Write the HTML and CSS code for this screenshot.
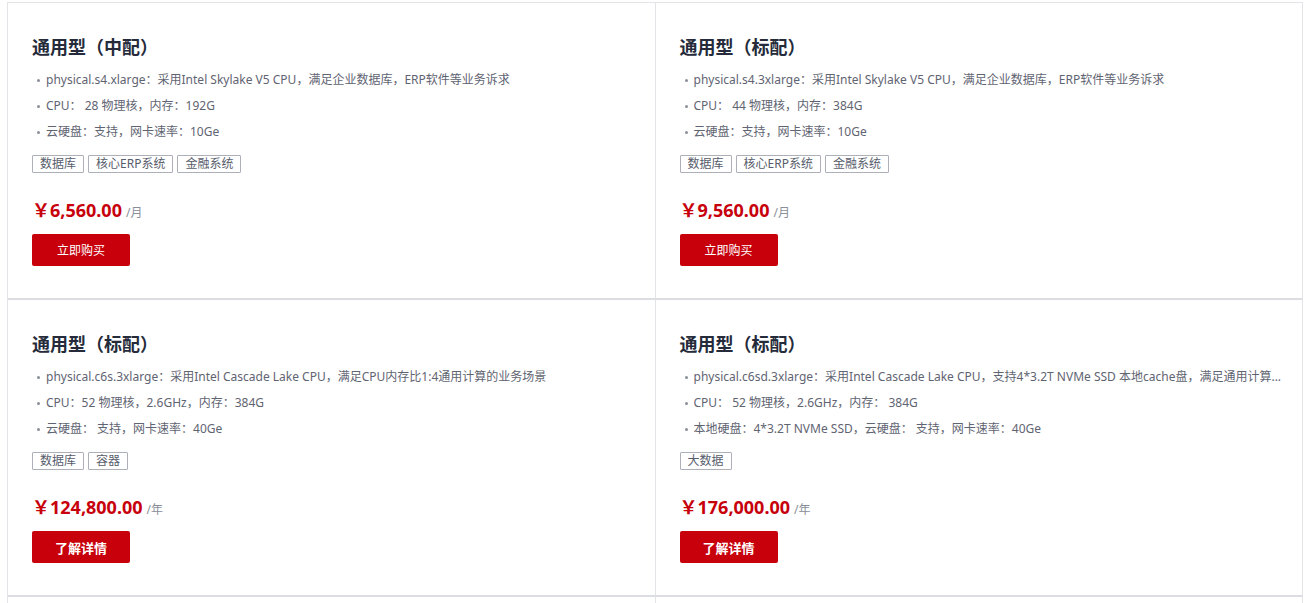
FILE: index.html
```html
<!DOCTYPE html>
<html lang="zh-CN">
<head>
<meta charset="utf-8">
<title>通用型</title>
<link rel="stylesheet" href="styles.css">
</head>
<body>
<div class="grid">
  <div class="card">
    <h3 class="title">通用型（中配）</h3>
    <ul class="specs">
      <li>physical.s4.xlarge：采用Intel Skylake V5 CPU，满足企业数据库，ERP软件等业务诉求</li>
      <li>CPU： 28 物理核，内存：192G</li>
      <li>云硬盘：支持，网卡速率：10Ge</li>
    </ul>
    <div class="tags"><span class="tag">数据库</span><span class="tag">核心ERP系统</span><span class="tag">金融系统</span></div>
    <div class="price"><span class="amount">￥6,560.00</span><span class="unit">/月</span></div>
    <a class="btn" href="#">立即购买</a>
  </div>
  <div class="card">
    <h3 class="title">通用型（标配）</h3>
    <ul class="specs">
      <li>physical.s4.3xlarge：采用Intel Skylake V5 CPU，满足企业数据库，ERP软件等业务诉求</li>
      <li>CPU： 44 物理核，内存：384G</li>
      <li>云硬盘：支持，网卡速率：10Ge</li>
    </ul>
    <div class="tags"><span class="tag">数据库</span><span class="tag">核心ERP系统</span><span class="tag">金融系统</span></div>
    <div class="price"><span class="amount">￥9,560.00</span><span class="unit">/月</span></div>
    <a class="btn" href="#">立即购买</a>
  </div>
  <div class="card">
    <h3 class="title">通用型（标配）</h3>
    <ul class="specs">
      <li>physical.c6s.3xlarge：采用Intel Cascade Lake CPU，满足CPU内存比1:4通用计算的业务场景</li>
      <li>CPU：52 物理核，2.6GHz，内存：384G</li>
      <li>云硬盘： 支持，网卡速率：40Ge</li>
    </ul>
    <div class="tags"><span class="tag">数据库</span><span class="tag">容器</span></div>
    <div class="price"><span class="amount">￥124,800.00</span><span class="unit">/年</span></div>
    <a class="btn btn-bold" href="#">了解详情</a>
  </div>
  <div class="card">
    <h3 class="title">通用型（标配）</h3>
    <ul class="specs">
      <li title="physical.c6sd.3xlarge：采用Intel Cascade Lake CPU，支持4*3.2T NVMe SSD 本地cache盘，满足通用计算的业务场景">physical.c6sd.3xlarge：采用Intel Cascade Lake CPU，支持4*3.2T NVMe SSD 本地cache盘，满足通用计算...</li>
      <li>CPU： 52 物理核，2.6GHz，内存： 384G</li>
      <li>本地硬盘：4*3.2T NVMe SSD，云硬盘： 支持，网卡速率：40Ge</li>
    </ul>
    <div class="tags"><span class="tag">大数据</span></div>
    <div class="price"><span class="amount">￥176,000.00</span><span class="unit">/年</span></div>
    <a class="btn btn-bold" href="#">了解详情</a>
  </div>
  <div class="card card-stub"></div>
  <div class="card card-stub"></div>
</div>
</body>
</html>
```
FILE: styles.css
```css
html, body {
  margin: 0;
  padding: 0;
  background: #fff;
  font-family: "Noto Sans", "Noto Sans CJK SC", sans-serif;
  overflow: hidden;
}
.grid {
  margin: 2px 3px 0 7px;
  display: grid;
  grid-template-columns: 1fr 1fr;
  border-top: 1px solid #e3e4e8;
  border-left: 1px solid #e3e4e8;
}
.card {
  box-sizing: border-box;
  height: 297px;
  padding: 32px 20px 0 24px;
  border-right: 1px solid #e3e4e8;
  border-bottom: 2px solid #dcdde1;
  min-width: 0;
}
.title {
  margin: 0;
  font-size: 18px;
  line-height: 24px;
  font-weight: 700;
  color: #252b3a;
}
.specs {
  margin: 8px 0 0;
  padding: 0;
  list-style: none;
}
.specs li {
  position: relative;
  padding-left: 14px;
  font-size: 12px;
  line-height: 26px;
  color: #5f6472;
  white-space: nowrap;
  overflow: hidden;
}
.specs li::before {
  content: "";
  position: absolute;
  left: 5px;
  top: 12px;
  width: 3px;
  height: 3px;
  border-radius: 50%;
  background: #8a8e99;
}
.tags {
  display: flex;
  gap: 4px;
  margin-top: 10px;
}
.tag {
  box-sizing: border-box;
  height: 18px;
  padding: 0 7px;
  border: 1px solid #adb0b8;
  border-radius: 1px;
  font-size: 12px;
  line-height: 16px;
  color: #575d6c;
}
.price {
  margin-top: 25px;
  display: flex;
  align-items: baseline;
  gap: 4px;
  height: 24px;
}
.amount {
  font-size: 18px;
  line-height: 24px;
  font-weight: 700;
  color: #c7000b;
}
.unit {
  font-size: 12px;
  color: #8a8e99;
}
.btn {
  display: flex;
  align-items: center;
  justify-content: center;
  margin-top: 12px;
  width: 98px;
  height: 32px;
  background: #c7000b;
  border-radius: 2px;
  color: #fff;
  font-size: 12px;
  text-decoration: none;
}
.btn-bold {
  font-weight: 700;
  font-size: 13px;
}
```
